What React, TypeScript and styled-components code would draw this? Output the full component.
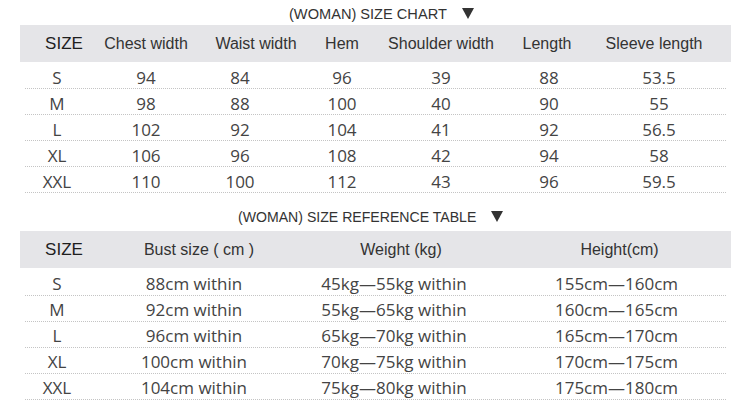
import React from "react";
import styled, { createGlobalStyle } from "styled-components";

const GlobalStyle = createGlobalStyle`
  html, body {
    margin: 0;
    padding: 0;
    background: #ffffff;
  }
  body {
    width: 750px;
    height: 400px;
    overflow: hidden;
  }
`;

const Page = styled.div`
  width: 750px;
  display: flex;
  flex-direction: column;
`;

const Title = styled.div<{ $left: number; $top: number; $height: number; $size: number }>`
  height: ${(p) => p.$height}px;
  padding-left: ${(p) => p.$left}px;
  padding-top: ${(p) => p.$top}px;
  box-sizing: border-box;
  display: flex;
  align-items: center;
  gap: 15px;
  font-family: "Liberation Sans", Arial, sans-serif;
  font-size: ${(p) => p.$size}px;
  color: #333;
  white-space: nowrap;
`;

const Arrow = styled.svg`
  width: 12px;
  height: 11px;
  fill: #333;
  flex: none;
`;

const Table = styled.div<{ $bodyTop: number }>`
  margin-left: 20px;
  width: 711px;

  & > :nth-child(2) {
    margin-top: ${(p) => p.$bodyTop}px;
  }
`;

const HeadRow = styled.div<{ $cols: string }>`
  height: 37px;
  background: #e5e5e8;
  display: grid;
  grid-template-columns: ${(p) => p.$cols};
  align-items: center;
`;

const HeadCell = styled.div<{ $shift?: number; $big?: boolean }>`
  display: flex;
  justify-content: center;
  white-space: nowrap;
  transform: translateX(${(p) => p.$shift ?? 0}px);
  font-family: "Liberation Sans", Arial, sans-serif;
  font-size: ${(p) => (p.$big ? 17 : 16)}px;
  color: ${(p) => (p.$big ? "#1e1e1e" : "#333")};
`;

/* dotted rule under each row, inset a few px from the band edges */
const BodyRow = styled.div<{ $cols: string }>`
  height: 26px;
  display: grid;
  grid-template-columns: ${(p) => p.$cols};
  align-items: center;
  background-image: repeating-linear-gradient(
    to right,
    #c4c4c4 0 1px,
    transparent 1px 2px
  );
  background-size: calc(100% - 9px) 1px;
  background-position: 5px 100%;
  background-repeat: no-repeat;
`;

const Cell = styled.div<{ $shift?: number; $pad: number }>`
  display: flex;
  justify-content: center;
  white-space: nowrap;
  transform: translateX(${(p) => p.$shift ?? 0}px);
  font-family: "Open Sans", "Noto Sans", sans-serif;
  font-size: 17px;
  color: #444;
  padding-top: ${(p) => p.$pad}px;
`;

type Col = { head: string; shift?: number; body?: number };

const chartCols = "74px 104px 84px 120px 78px 138px 82px 31px";
const chartHead: Col[] = [
  { head: "SIZE", shift: 7 },
  { head: "Chest width" },
  { head: "Waist width", shift: 16 },
  { head: "Hem" },
  { head: "Shoulder width" },
  { head: "Length", shift: -2 },
  { head: "Sleeve length", shift: -5 },
];
const chartRows = [
  ["S", "94", "84", "96", "39", "88", "53.5"],
  ["M", "98", "88", "100", "40", "90", "55"],
  ["L", "102", "92", "104", "41", "92", "56.5"],
  ["XL", "106", "96", "108", "42", "94", "58"],
  ["XXL", "110", "100", "112", "43", "96", "59.5"],
];

const refCols = "74px 200px 200px 237px";
const refHead: Col[] = [
  { head: "SIZE", shift: 7 },
  { head: "Bust size ( cm )", shift: 5 },
  { head: "Weight (kg)", shift: 7 },
  { head: "Height(cm)", shift: 7, body: 4 },
];
const refRows = [
  ["S", "88cm within", "45kg—55kg within", "155cm—160cm"],
  ["M", "92cm within", "55kg—65kg within", "160cm—165cm"],
  ["L", "96cm within", "65kg—70kg within", "165cm—170cm"],
  ["XL", "100cm within", "70kg—75kg within", "170cm—175cm"],
  ["XXL", "104cm within", "75kg—80kg within", "175cm—180cm"],
];

type TableProps = {
  cols: string;
  head: Col[];
  rows: string[][];
  bodyTop: number;
  pad: number;
};

const SizeTable = ({ cols, head, rows, bodyTop, pad }: TableProps) => (
  <Table $bodyTop={bodyTop}>
    <HeadRow $cols={cols}>
      {head.map((c, i) => (
        <HeadCell key={i} $shift={c.shift} $big={i === 0}>
          {c.head}
        </HeadCell>
      ))}
    </HeadRow>
    {rows.map((r, i) => (
      <BodyRow key={i} $cols={cols}>
        {r.map((v, j) => (
          <Cell key={j} $shift={head[j].body} $pad={pad}>
            {v}
          </Cell>
        ))}
      </BodyRow>
    ))}
  </Table>
);

const DownArrow = () => (
  <Arrow viewBox="0 0 12 11">
    <polygon points="0,0 12,0 6,11" />
  </Arrow>
);

export default function App() {
  return (
    <Page>
      <GlobalStyle />
      <Title $left={289} $top={2} $height={25} $size={14.6}>
        (WOMAN) SIZE CHART <DownArrow />
      </Title>
      <SizeTable cols={chartCols} head={chartHead} rows={chartRows} bodyTop={1} pad={3} />
      <Title $left={238} $top={9} $height={38} $size={14.1}>
        (WOMAN) SIZE REFERENCE TABLE <DownArrow />
      </Title>
      <SizeTable cols={refCols} head={refHead} rows={refRows} bodyTop={2} pad={1} />
    </Page>
  );
}
